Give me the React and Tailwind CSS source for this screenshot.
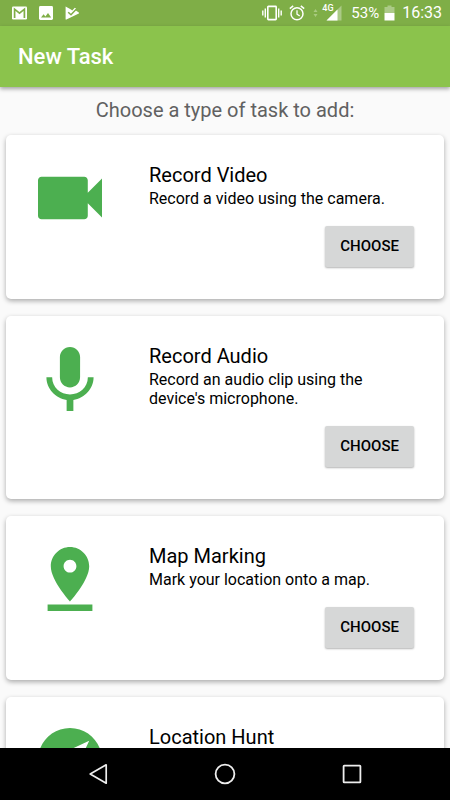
import React from "react";

const TASK_TYPES = [
  {
    id: "video",
    title: "Record Video",
    description: "Record a video using the camera.",
    viewBox: "3 3 18 18",
    path: "M17 10.5V7c0-.55-.45-1-1-1H4c-.55 0-1 .45-1 1v10c0 .55.45 1 1 1h12c.55 0 1-.45 1-1v-3.5l4 4v-11l-4 4z",
  },
  {
    id: "audio",
    title: "Record Audio",
    description: "Record an audio clip using the device's microphone.",
    viewBox: "2.5 3 19 19",
    path: "M12 15c1.66 0 2.99-1.34 2.99-3L15 6c0-1.66-1.34-3-3-3S9 4.34 9 6v6c0 1.66 1.34 3 3 3zm5.3-3c0 3-2.54 5.1-5.3 5.1S6.7 15 6.7 12H5c0 3.42 2.72 6.23 6 6.72V22h2v-3.28c3.28-.48 6-3.3 6-6.72h-1.7z",
  },
  {
    id: "map",
    title: "Map Marking",
    description: "Mark your location onto a map.",
    viewBox: "2 2 20 20",
    path: "M18 8c0-3.31-2.69-6-6-6S6 4.69 6 8c0 4.5 6 11 6 11s6-6.5 6-11zm-8 0c0-1.1.9-2 2-2s2 .9 2 2-.89 2-2 2-2-.9-2-2zM5 20v2h14v-2H5z",
  },
  {
    id: "hunt",
    title: "Location Hunt",
    viewBox: "2 2 20 20",
    path: "M12 10.9c-.61 0-1.1.49-1.1 1.1s.49 1.1 1.1 1.1c.61 0 1.1-.49 1.1-1.1s-.49-1.1-1.1-1.1zM12 2C6.48 2 2 6.48 2 12s4.48 10 10 10 10-4.48 10-10S17.52 2 12 2zm2.19 12.19L6 18l3.81-8.19L18 6l-3.81 8.19z",
  },
];

function StatusBar() {
  return (
    <div className="flex h-[26px] shrink-0 items-center justify-between bg-[#7fae47] pr-2 pl-3 text-white">
      {/* Notifications */}
      <div className="flex items-center gap-3">
        <svg width="15" height="14" viewBox="0 0 15 14">
          <rect width="15" height="13" y="0.5" rx="1.2" fill="#fff" />
          <path d="M2.6 12V3.2L7.5 7.2l4.9-4V12" fill="none" stroke="#7fae47" strokeWidth="1.7" />
        </svg>
        <svg width="14" height="14" viewBox="0 0 14 14">
          <rect width="14" height="14" rx="1.4" fill="#fff" />
          <path d="M2 11.6l2.6-3.4 1.8 2.2 2.6-3.5 3.2 4.7z" fill="#7fae47" />
        </svg>
        <svg width="14" height="14" viewBox="0 0 14 14">
          <path d="M0.6 0.4L6 3.4l1.2 1.2 2.6-2.9 1.3 1-0.6 1.6 3.3 2.2c.3.3.3.8 0 1L1.4 13.6c-.5.2-.8 0-.8-.5z" fill="#fff" />
          <path d="M3.2 6.2l2.8 2.6 5.2-5.6" fill="none" stroke="#7fae47" strokeWidth="1.5" />
        </svg>
      </div>

      {/* System icons */}
      <div className="flex items-center">
        <svg width="20" height="16" viewBox="0 0 20 16" fill="none" stroke="#fff">
          <rect x="5.8" y="1.4" width="8.4" height="13.2" rx="0.6" strokeWidth="1.6" />
          <path d="M3.3 3.5v9M16.7 3.5v9" strokeWidth="1.4" />
          <path d="M0.8 5.5v5M19.2 5.5v5" strokeWidth="1.4" />
        </svg>
        <svg className="ml-[7px]" width="16" height="16" viewBox="0 0 16 16" fill="none" stroke="#fff">
          <circle cx="8" cy="8.8" r="6" strokeWidth="1.5" />
          <path d="M8 5.2v4l2.7 1.7" strokeWidth="1.3" />
          <path d="M0.8 3.7L4.2 0.9M15.2 3.7L11.8 0.9" strokeWidth="1.5" />
        </svg>
        <svg className="ml-2" width="5" height="10" viewBox="0 0 5 10" fill="#a9cb80">
          <path d="M2.5 1L4.5 4h-4zM2.5 9L4.5 6h-4z" />
        </svg>
        <div className="relative ml-2 h-4 w-4">
          <svg width="16" height="16" viewBox="0 0 16 16">
            <path d="M15.5 0.5v15H0.5z" fill="#fff" fillOpacity="0.35" />
            <path d="M11.5 4.5v11h-11z" fill="#fff" />
          </svg>
          <span className="absolute -top-px -left-1 text-[9px] leading-[9px] font-medium">4G</span>
        </div>
        <span className="ml-[9px] text-[15px]">53%</span>
        <svg className="ml-[5px]" width="11" height="16" viewBox="0 0 11 16">
          <path d="M3.5 0.5h4V2H10.5v6H0.5V2h3z" fill="#fff" fillOpacity="0.35" />
          <path d="M0.5 8h10v7.5h-10z" fill="#fff" />
        </svg>
        <span className="ml-[7px] text-base">16:33</span>
      </div>
    </div>
  );
}

function TaskCard({ task }) {
  return (
    <li className="flex rounded-[5px] bg-white pt-7 pr-[30px] pb-8 pl-8 shadow-[0_2px_5px_rgba(0,0,0,0.32)]">
      <svg className="mt-[3px] h-16 w-16 shrink-0 fill-[#4caf50]" viewBox={task.viewBox}>
        <path d={task.path} />
      </svg>
      <div className="ml-[47px] flex flex-1 flex-col">
        <h2 className="text-xl leading-6">{task.title}</h2>
        {task.description && (
          <>
            <p className="mt-0.5 text-base leading-[19px]">{task.description}</p>
            <button
              type="button"
              className="mt-[18px] h-[41px] self-end rounded-xs bg-[#d6d7d7] px-[15px] text-[15px] font-medium shadow-[0_1px_2px_rgba(0,0,0,0.3)]"
            >
              CHOOSE
            </button>
          </>
        )}
      </div>
    </li>
  );
}

function NavBar() {
  return (
    <nav className="grid h-[52px] shrink-0 grid-cols-3 bg-black px-[34px]">
      <button type="button" aria-label="Back" className="flex items-center justify-center">
        <svg width="22" height="22" viewBox="0 0 22 22" fill="none" stroke="#eee" strokeWidth="1.7">
          <path d="M19.2 1.8v18.4L3.2 11z" strokeLinejoin="round" />
        </svg>
      </button>
      <button type="button" aria-label="Home" className="flex items-center justify-center">
        <svg width="22" height="22" viewBox="0 0 22 22" fill="none" stroke="#eee" strokeWidth="1.8">
          <circle cx="11" cy="11" r="9.4" />
        </svg>
      </button>
      <button type="button" aria-label="Recent apps" className="flex items-center justify-center">
        <svg width="22" height="22" viewBox="0 0 22 22" fill="none" stroke="#eee" strokeWidth="1.8">
          <rect x="2.6" y="2.6" width="16.8" height="16.8" rx="0.6" />
        </svg>
      </button>
    </nav>
  );
}

export default function App() {
  return (
    <div className="flex h-screen flex-col bg-[#fafafa] font-['Roboto',sans-serif] text-black">
      <StatusBar />
      <header className="z-10 flex h-[61px] shrink-0 items-center bg-[#8bc34c] px-[18px] shadow-[0_2px_4px_rgba(0,0,0,0.35)]">
        <h1 className="text-[22px] font-medium text-white">New Task</h1>
      </header>

      <main className="flex-1 overflow-y-auto px-1.5 pt-[11px] pb-4 [scrollbar-width:none]">
        <p className="text-center text-xl leading-6 text-[#616161]">Choose a type of task to add:</p>
        <ul className="mt-[13px] flex flex-col gap-[17px]">
          {TASK_TYPES.map((task) => (
            <TaskCard key={task.id} task={task} />
          ))}
        </ul>
      </main>

      <NavBar />
    </div>
  );
}
